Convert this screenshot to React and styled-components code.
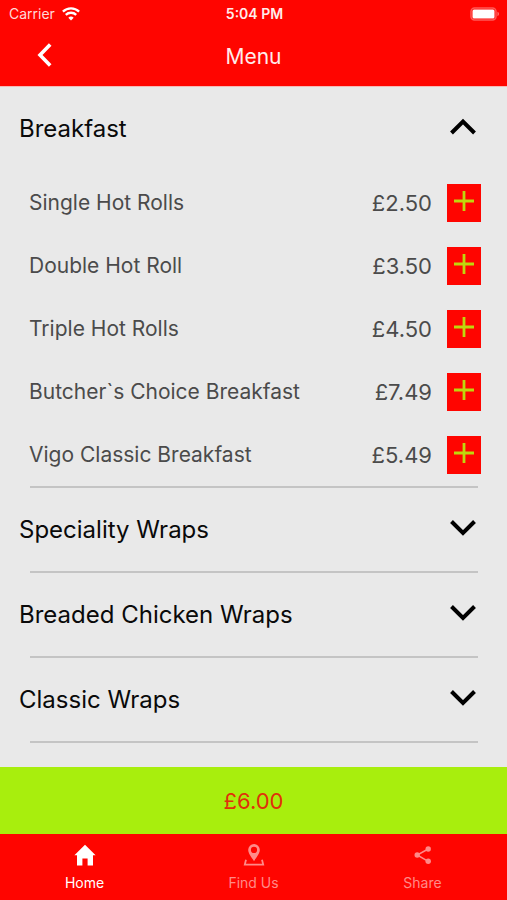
import React, { useState } from "react";
import styled, { createGlobalStyle } from "styled-components";

const GlobalStyle = createGlobalStyle`
  * {
    box-sizing: border-box;
  }
  body {
    margin: 0;
    background: #e9e9e9;
    font-family: Inter, "Liberation Sans", sans-serif;
  }
  button {
    font-family: inherit;
    border: 0;
    padding: 0;
    cursor: pointer;
  }
`;

const Screen = styled.div`
  display: flex;
  flex-direction: column;
  height: 100vh;
`;

const Header = styled.header`
  flex: none;
  border-bottom: 1px solid #f7b9b6;
  background: #ff0500;
  color: #fff;
`;

const StatusBar = styled.div`
  display: grid;
  grid-template-columns: 1fr auto 1fr;
  align-items: center;
  height: 27px;
  padding: 0 7px 0 9px;
  font-size: 14px;
`;

const Carrier = styled.div`
  display: flex;
  align-items: center;
  gap: 7px;
  color: #ffd9d8;
`;

const Clock = styled.time`
  color: #ffeceb;
  font-weight: 600;
`;

const BatteryIcon = styled.svg`
  justify-self: end;
`;

const TitleBar = styled.div`
  display: grid;
  grid-template-columns: 56px 1fr 56px;
  align-items: center;
  height: 59px;
`;

const BackButton = styled.button`
  display: flex;
  justify-content: flex-end;
  padding: 0 4px 4px 0;
  background: none;
  color: inherit;
`;

const Title = styled.h1`
  margin: 0;
  color: #ffeceb;
  font-size: 21px;
  font-weight: 400;
  text-align: center;
`;

const Content = styled.main`
  flex: 1;
  min-height: 0;
  overflow: hidden;
`;

const Section = styled.section`
  & + &::before {
    content: "";
    display: block;
    height: 2px;
    margin: 0 29px 0 30px;
    background: #c4c4c4;
  }
`;

const SectionButton = styled.button`
  display: flex;
  align-items: center;
  justify-content: space-between;
  width: 100%;
  height: 83px;
  padding: 0 30px 0 19px;
  background: none;
  color: #0a0a0a;
  font-size: 24px;
  text-align: left;
`;

const Items = styled.ul`
  margin: 0;
  padding: 1px 0 0;
  list-style: none;
`;

const Item = styled.li`
  display: flex;
  align-items: center;
  height: 63px;
  padding: 0 26px 0 29px;
  color: #4b4b4b;
`;

const Name = styled.span`
  flex: 1;
  font-size: 21px;
`;

const Price = styled.span`
  font-size: 22px;
`;

const AddButton = styled.button`
  display: flex;
  align-items: center;
  justify-content: center;
  width: 34px;
  height: 38px;
  margin-left: 15px;
  padding-bottom: 3px;
  background: #ff0500;
  color: #bfd80c;
`;

const Total = styled.button`
  flex: none;
  height: 67px;
  background: #a8ee0d;
  color: #e0300a;
  font-size: 22px;
`;

const TabBar = styled.nav`
  display: grid;
  grid-template-columns: repeat(3, 1fr);
  flex: none;
  height: 66px;
  background: #ff0500;
`;

const Tab = styled.a`
  display: flex;
  flex-direction: column;
  align-items: center;
  gap: 7px;
  padding-top: 9px;
  color: ${(props) => (props.$active ? "#fff" : "#ff8a88")};
  font-size: 14px;
  line-height: 18px;
  text-decoration: none;
`;

const Wifi = () => (
  <svg width="18" height="14" viewBox="0 0 18 14" fill="none" stroke="#fff" strokeWidth="2.3" aria-hidden="true">
    <path d="M.9 4.600a11.600 11.600 0 0 1 16.200 0" />
    <path d="M3.800 7.900a7.400 7.400 0 0 1 10.400 0" />
    <path d="M9 13.400 6.300 10.700a3.900 3.900 0 0 1 5.400 0z" fill="#fff" stroke="none" />
  </svg>
);

const Battery = () => (
  <BatteryIcon width="30" height="14" viewBox="0 0 30 14" role="img" aria-label="Battery full">
    <rect x="1" y="1" width="25" height="12" rx="3.5" fill="none" stroke="#ff5a57" strokeWidth="1.5" />
    <rect x="2.500" y="2.500" width="22" height="9" rx="1.500" fill="#fff" />
    <path d="M27.500 4.800a2.400 2.400 0 0 1 0 4.400z" fill="#ff7d7a" />
  </BatteryIcon>
);

const Back = () => (
  <svg width="15" height="24" viewBox="0 0 15 24" fill="none" stroke="currentColor" strokeWidth="3.6" aria-hidden="true">
    <path d="M13.200 1.400 3 12l10.200 10.600" />
  </svg>
);

const Chevron = ({ open }) => (
  <svg width="28" height="22" viewBox="0 0 28 22" fill="none" stroke="#000" strokeWidth="4" aria-hidden="true">
    <path d={open ? "M2.500 15 14 3.500 25.500 15" : "M2.500 2.500 14 14 25.500 2.500"} />
  </svg>
);

const Plus = () => (
  <svg width="20" height="20" viewBox="0 0 20 20" stroke="currentColor" strokeWidth="2.8" aria-hidden="true">
    <path d="M10 0v20M0 10h20" />
  </svg>
);

const HomeIcon = () => (
  <svg width="22" height="24" viewBox="0 0 22 24" fill="currentColor" aria-hidden="true">
    <path d="M11 1.800.4 12.200H3V22.600h5.400v-7.200h5.200v7.200H19V12.200h2.600z" />
  </svg>
);

const PinIcon = () => (
  <svg width="22" height="24" viewBox="0 0 22 24" fill="none" stroke="currentColor" aria-hidden="true">
    <path
      fill="currentColor"
      fillRule="evenodd"
      stroke="none"
      d="M11 1a5.800 5.800 0 0 0-5.800 5.800C5.200 10.600 8.400 14 11 18.200c2.600-4.200 5.800-7.600 5.800-11.400A5.800 5.800 0 0 0 11 1zm0 2.800a3.100 3.100 0 1 1 0 6.200 3.100 3.100 0 0 1 0-6.200z"
    />
    <path d="M3 16.800 1.800 21.600h18.400L19 16.800" strokeWidth="1.800" />
  </svg>
);

const ShareIcon = () => (
  <svg width="22" height="24" viewBox="0 0 22 24" fill="currentColor" aria-hidden="true">
    <path d="M16.200 6 5.200 12l11 6.300" fill="none" stroke="currentColor" strokeWidth="1.500" />
    <circle cx="16.200" cy="6" r="2.700" />
    <circle cx="5.200" cy="12" r="2.700" />
    <circle cx="16.200" cy="18.300" r="2.700" />
  </svg>
);

const sections = [
  {
    name: "Breakfast",
    items: [
      { name: "Single Hot Rolls", price: "£2.50" },
      { name: "Double Hot Roll", price: "£3.50" },
      { name: "Triple Hot Rolls", price: "£4.50" },
      { name: "Butcher`s Choice Breakfast", price: "£7.49" },
      { name: "Vigo Classic Breakfast", price: "£5.49" },
    ],
  },
  { name: "Speciality Wraps", items: [] },
  { name: "Breaded Chicken Wraps", items: [] },
  { name: "Classic Wraps", items: [] },
  { name: "", items: [] },
];

const tabs = [
  { name: "Home", Icon: HomeIcon },
  { name: "Find Us", Icon: PinIcon },
  { name: "Share", Icon: ShareIcon },
];

function App() {
  const [open, setOpen] = useState("Breakfast");

  return (
    <>
      <GlobalStyle />
      <Screen>
        <Header>
          <StatusBar>
            <Carrier>
              Carrier
              <Wifi />
            </Carrier>
            <Clock>5:04 PM</Clock>
            <Battery />
          </StatusBar>
          <TitleBar>
            <BackButton aria-label="Back">
              <Back />
            </BackButton>
            <Title>Menu</Title>
          </TitleBar>
        </Header>
        <Content>
          {sections.map((section) => (
            <Section key={section.name}>
              {section.name && (
                <SectionButton
                  aria-expanded={open === section.name}
                  onClick={() => setOpen(open === section.name ? null : section.name)}
                >
                  {section.name}
                  <Chevron open={open === section.name} />
                </SectionButton>
              )}
              {open === section.name && (
                <Items>
                  {section.items.map((item) => (
                    <Item key={item.name}>
                      <Name>{item.name}</Name>
                      <Price>{item.price}</Price>
                      <AddButton aria-label={`Add ${item.name}`}>
                        <Plus />
                      </AddButton>
                    </Item>
                  ))}
                </Items>
              )}
            </Section>
          ))}
        </Content>
        <Total>£6.00</Total>
        <TabBar>
          {tabs.map(({ name, Icon }) => (
            <Tab key={name} href="#" $active={name === "Home"}>
              <Icon />
              {name}
            </Tab>
          ))}
        </TabBar>
      </Screen>
    </>
  );
}

export default App;
